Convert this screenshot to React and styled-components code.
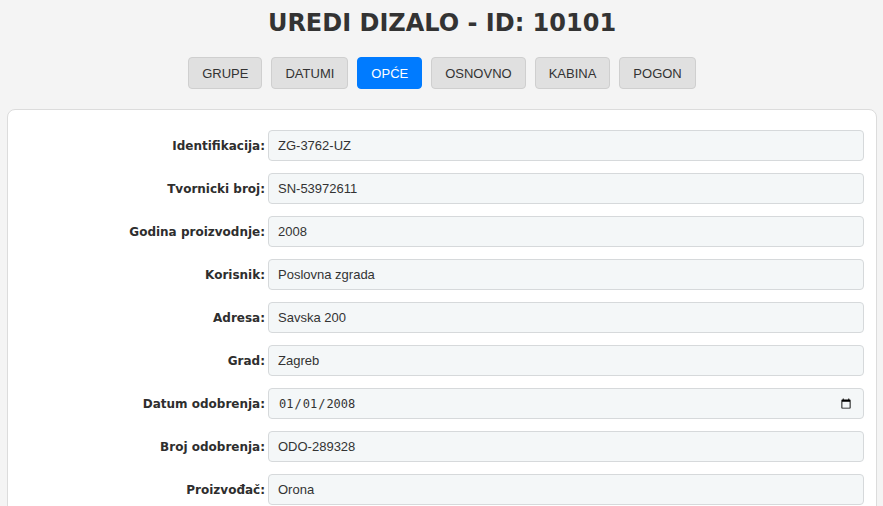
import React from 'react'
import styled, { createGlobalStyle } from 'styled-components'

const GlobalStyle = createGlobalStyle`
    body {
        margin: 0;
        background: #f4f4f4;
        font-family: "Liberation Sans", Arial, sans-serif;
        color: #333;
    }
`

const tabs = ['GRUPE', 'DATUMI', 'OPĆE', 'OSNOVNO', 'KABINA', 'POGON']

const fields = [
    { label: 'Identifikacija:', value: 'ZG-3762-UZ' },
    { label: 'Tvornicki broj:', value: 'SN-53972611' },
    { label: 'Godina proizvodnje:', value: '2008' },
    { label: 'Korisnik:', value: 'Poslovna zgrada' },
    { label: 'Adresa:', value: 'Savska 200' },
    { label: 'Grad:', value: 'Zagreb' },
    { label: 'Datum odobrenja:', value: '2008-01-01', type: 'date' },
    { label: 'Broj odobrenja:', value: 'ODO-289328' },
    { label: 'Proizvođač:', value: 'Orona' },
]

const App = () => {
    return (
        <Page>
            <GlobalStyle />
            <Title>UREDI DIZALO - ID: 10101</Title>
            <TabBar>
                {tabs.map(t => (
                    <Tab key={t} active={t === 'OPĆE'}>{t}</Tab>
                ))}
            </TabBar>
            <Card>
                {fields.map(f => (
                    <Row key={f.label}>
                        <Label>{f.label}</Label>
                        <Input
                            type={f.type || 'text'}
                            defaultValue={f.value}
                            mono={f.type === 'date'}
                        />
                    </Row>
                ))}
            </Card>
        </Page>
    )
}

const Page = styled.div`
    display: flex;
    flex-direction: column;
    padding: 0 6px 0 7px;
`

const Title = styled.h1`
    margin: 8px 0 0;
    text-align: center;
    font-family: "DejaVu Sans", Verdana, sans-serif;
    font-size: 24px;
    font-weight: bold;
    color: #333;
    line-height: 30px;
`

const TabBar = styled.div`
    display: flex;
    justify-content: center;
    gap: 9px;
    margin-top: 19px;
`

const Tab = styled.button`
    height: 32px;
    padding: 0 13px;
    border: 1px solid ${p => (p.active ? '#007bff' : '#cfcfcf')};
    border-radius: 4px;
    background: ${p => (p.active ? '#007bff' : '#e0e0e0')};
    color: ${p => (p.active ? '#fff' : '#333')};
    font-family: "Liberation Sans", Arial, sans-serif;
    font-size: 13px;
    cursor: pointer;
`

const Card = styled.div`
    margin-top: 20px;
    background: #fff;
    border: 1px solid #dcdcdc;
    border-radius: 8px;
    padding: 20px 12px 20px 20px;
    display: flex;
    flex-direction: column;
    gap: 12px;
`

const Row = styled.div`
    display: flex;
    align-items: center;
    gap: 3px;
`

const Label = styled.label`
    width: 237px;
    text-align: right;
    font-family: "DejaVu Sans", Verdana, sans-serif;
    font-size: 12px;
    font-weight: bold;
    color: #2e2e2e;
`

const Input = styled.input`
    flex: 1;
    box-sizing: border-box;
    height: 31px;
    padding: 0 9px;
    background: #f4f7f8;
    border: 1px solid #d6d9db;
    border-radius: 4px;
    color: #333;
    font-family: ${p => (p.mono ? '"DejaVu Sans Mono", monospace' : '"Liberation Sans", Arial, sans-serif')};
    font-size: ${p => (p.mono ? '12px' : '13px')};
    outline: none;
`

export default App
